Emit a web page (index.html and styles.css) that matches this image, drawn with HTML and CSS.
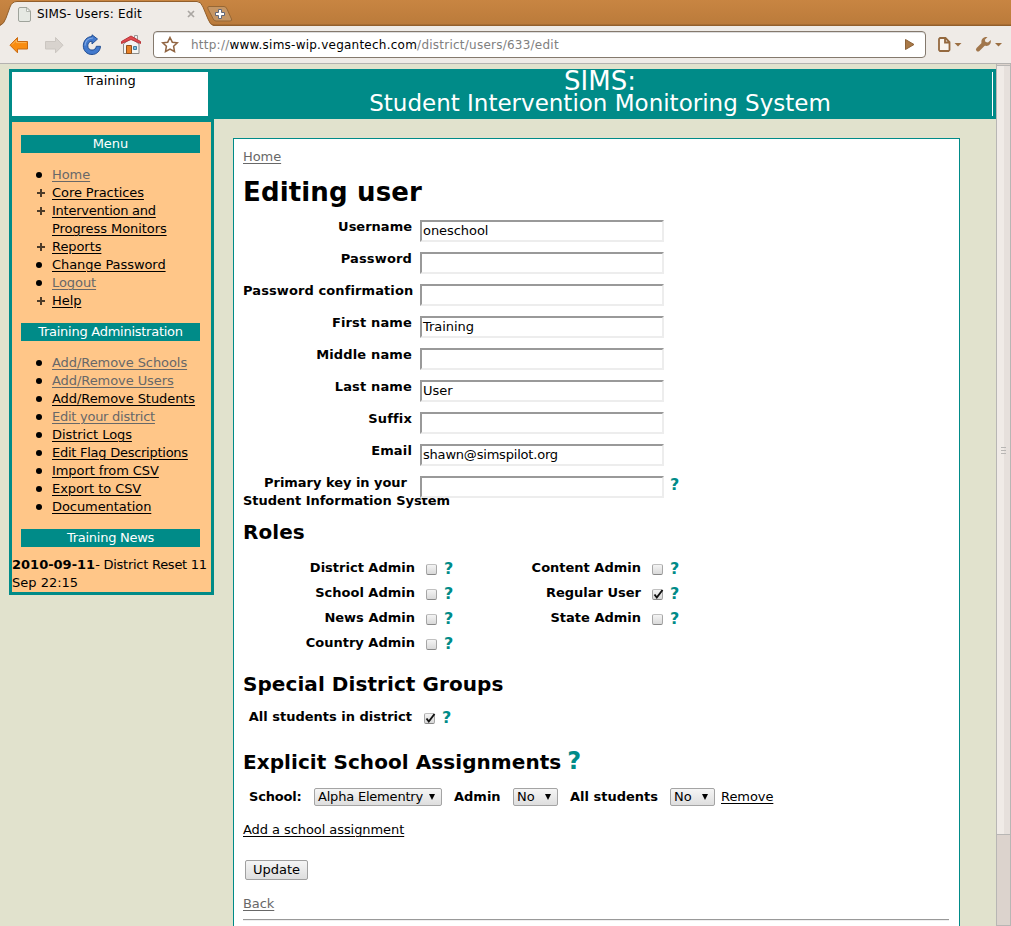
FILE: index.html
```html
<!DOCTYPE html>
<html lang="en">
<head>
<meta charset="utf-8">
<title>SIMS- Users: Edit</title>
<link rel="stylesheet" href="styles.css">
</head>
<body>
<div class="tabstrip">
  <svg class="tab-shape" width="240" height="26" viewBox="0 0 240 26">
    <path d="M0 26V25.500Q4 24 6 18L10 7Q12 1.500 17 1.500H197Q201 1.500 203 7L208 19Q210 25 214 26Z" fill="#efebe7"/>
    <path d="M0 25.500Q4 24 6 18L10 7Q12 1.500 17 1.500H197Q201 1.500 203 7L208 19Q210 25 214 25.500H240" fill="none" stroke="#925f2c"/>
    <path d="M209 6.500h15q2 0 3 2.500l4.500 10q.8 2-1.500 2h-14q-2 0-3-2.500L208 9q-1-2.500 1-2.500z" fill="#c59665" stroke="#966735"/>
    <path d="M218.500 9.500h3v3h3v3h-3v3h-3v-3h-3v-3h3z" fill="#fff" stroke="#626879"/>
  </svg>
  <svg class="page-icon" width="14" height="17" viewBox="0 0 14 17"><path d="M3 1.500h6l3.500 3.500v9q0 1.500-1.500 1.500H2q-1.500 0-1.500-1.500V3q0-1.500 1.500-1.500z" fill="#e6e9e3" stroke="#9fa39b"/><path d="M8.500 2v3.500h3.500z" fill="#fff" stroke="#b4b8b0"/></svg>
  <span class="tab-title">SIMS- Users: Edit</span>
  <svg class="tab-close" width="8" height="8" viewBox="0 0 8 8"><path d="M1 1l6 6M7 1L1 7" stroke="#aaa6a2" stroke-width="1.700"/></svg>
</div>
<div class="toolbar">
  <svg class="nav back" width="20" height="18" viewBox="0 0 20 18"><path d="M1 9.200L8.500 1.500V5.500H18.500V13H8.500V16.800z" fill="#f98d12" stroke="#c96a12"/><path d="M3 8.700L7.500 4v2.600h10" fill="none" stroke="#fcb558"/></svg>
  <svg class="nav fwd" width="20" height="18" viewBox="0 0 20 18"><path d="M19 9.200L11.500 1.500V5.500H1.500V13h10v3.800z" fill="#d8d3ce" stroke="#cbc6c1"/></svg>
  <svg class="nav reload" width="20" height="22" viewBox="0 0 20 22"><path d="M10 2.500V.800L15.500 5 10 10V7.200C7 7.400 5.800 9.200 5.800 11.800c0 2.600 1.800 4.300 4.200 4.300s4-1.500 4.300-3.800h4.200c-.4 5-4 8.200-8.500 8.200-5 0-8.700-3.800-8.700-8.600C1.300 6.500 5 2.700 10 2.500z" fill="#4279cd" stroke="#244f93"/><path d="M3 11.500C3.300 7 6 4.200 11 4" fill="none" stroke="#86abe4" stroke-width="1.200"/></svg>
  <svg class="nav home" width="22" height="21" viewBox="0 0 22 21"><path d="M14.500 1.500h3v6h-3z" fill="#eee" stroke="#999"/><path d="M3.500 10L11 4l8 6v9.500H3.500z" fill="#f4f4f2" stroke="#8b8b88"/><path d="M1.500 9.500V7.500L11 2l9.500 5.500v2L11 5.500z" fill="#e04a4e" stroke="#b83439"/><path d="M6.500 11.500h5v8h-5z" fill="#e98227" stroke="#90501c"/><path d="M13.500 12.500h3v3h-3z" fill="#7bbfe0" stroke="#427f9f"/></svg>
  <div class="omnibox">
    <svg class="star" width="18" height="17" viewBox="0 0 18 17"><path d="M9 1.500L11.300 6.200L16.300 6.800L12.600 10.200L13.500 15.500L9 13L4.500 15.500L5.400 10.200L1.700 6.800L6.700 6.200z" fill="#fff" stroke="#916542" stroke-width="1.500"/></svg>
    <span class="url"><span class="scheme">http://</span><b>www.sims-wip.vegantech.com</b>/district/users/633/edit</span>
    <svg class="go" width="10" height="11" viewBox="0 0 10 11"><path d="M0.500 .5L9 5.500L.5 10.500z" fill="#a97947" stroke="#8c6238"/></svg>
  </div>
  <svg class="doc" width="25" height="17" viewBox="0 0 25 17"><path d="M3 2h5.500l4 4v8l-1 1H3l-1-1V3zM8 2v4.500h4.500" fill="#f8f4ef" stroke="#94693f" stroke-width="1.800"/><path d="M17.500 7h7L21 10.500z" fill="#9b6f42"/></svg>
  <svg class="wrench" width="28" height="17" viewBox="0 0 28 17"><path d="M3 13.500L9 7.500" stroke="#a1764b" stroke-width="4" stroke-linecap="round"/><path d="M12.500 1L9.800 3.800L10.500 6L13 6.500L15.800 4C16.500 8.500 13 11 9.500 9.500L6.500 7C5.800 3 8.500.4 12.500 1z" fill="#a1764b"/><path d="M20 7h7l-3.500 3.500z" fill="#9b6f42"/></svg>
</div>
<div class="viewport">
  <div class="page">
    <header class="banner">
      <div class="logo">Training</div>
      <h1 class="brand"><span class="short">SIMS:</span><span>Student Intervention Monitoring System</span></h1>
      <i class="edge"></i>
    </header>
    <div class="columns">
      <nav class="sidebar">
        <h3 class="bar">Menu</h3>
        <ul class="menu">
          <li><a class="seen">Home</a></li>
          <li class="plus"><a>Core Practices</a></li>
          <li class="plus"><a><span class="tight">Intervention and</span><br>Progress Monitors</a></li>
          <li class="plus"><a>Reports</a></li>
          <li><a>Change Password</a></li>
          <li><a class="seen">Logout</a></li>
          <li class="plus"><a>Help</a></li>
        </ul>
        <h3 class="bar tight">Training Administration</h3>
        <ul class="menu">
          <li><a class="seen">Add/Remove Schools</a></li>
          <li><a class="seen">Add/Remove Users</a></li>
          <li><a>Add/Remove Students</a></li>
          <li><a class="seen tight">Edit your district</a></li>
          <li><a>District Logs</a></li>
          <li><a class="tight">Edit Flag Descriptions</a></li>
          <li><a>Import from CSV</a></li>
          <li><a>Export to CSV</a></li>
          <li><a>Documentation</a></li>
        </ul>
        <h3 class="bar tight">Training News</h3>
        <p class="news"><b>2010-09-11</b><span class="tight">- District Reset 11</span><br>Sep 22:15</p>
      </nav>
      <main class="content">
        <a class="seen">Home</a>
        <h1 class="title">Editing user</h1>
        <div class="field"><label class="plain">Username</label><div class="input">oneschool</div></div>
        <div class="field"><label>Password</label><div class="input"></div></div>
        <div class="field"><label class="full">Password confirmation</label><div class="input"></div></div>
        <div class="field"><label>First name</label><div class="input">Training</div></div>
        <div class="field"><label>Middle name</label><div class="input"></div></div>
        <div class="field"><label>Last name</label><div class="input">User</div></div>
        <div class="field"><label>Suffix</label><div class="input"></div></div>
        <div class="field"><label>Email</label><div class="input mail">shawn@simspilot.org</div></div>
        <div class="field"><label class="long"><span>Primary key in your</span><br>Student Information System</label><div class="input"></div><b class="help">?</b></div>
        <h2 class="roles-title">Roles</h2>
        <div class="roles">
          <div class="role"><label>District Admin</label><i class="check"></i><b class="help">?</b></div>
          <div class="role"><label>Content Admin</label><i class="check"></i><b class="help">?</b></div>
          <div class="role"><label>School Admin</label><i class="check"></i><b class="help">?</b></div>
          <div class="role"><label>Regular User</label><i class="check"><svg width="12" height="12" viewBox="0 0 12 12"><path d="M2.500 5.500L4.800 8.500L10.500 1" fill="none" stroke="#111" stroke-width="1.900"/></svg></i><b class="help">?</b></div>
          <div class="role"><label>News Admin</label><i class="check"></i><b class="help">?</b></div>
          <div class="role"><label>State Admin</label><i class="check"></i><b class="help">?</b></div>
          <div class="role"><label>Country Admin</label><i class="check"></i><b class="help">?</b></div>
        </div>
        <h2 class="groups-title">Special District Groups</h2>
        <div class="role group"><label>All students in district</label><i class="check"><svg width="12" height="12" viewBox="0 0 12 12"><path d="M2.500 5.500L4.800 8.500L10.500 1" fill="none" stroke="#111" stroke-width="1.900"/></svg></i><b class="help">?</b></div>
        <h2 class="assign-title">Explicit School Assignments <span class="bighelp">?</span></h2>
        <div class="assign">
          <label class="l-school">School:</label><div class="select wide"><span>Alpha Elementry</span><i></i></div>
          <label class="l-admin">Admin</label><div class="select"><span>No</span><i></i></div>
          <label class="l-all">All students</label><div class="select"><span>No</span><i></i></div>
          <a>Remove</a>
        </div>
        <a class="add">Add a school assignment</a>
        <div class="button">Update</div>
        <a class="seen backlink">Back</a>
        <hr>
      </main>
    </div>
  </div>
  <div class="scrollbar"><div class="thumb"><i></i><i></i><i></i></div></div>
</div>
</body>
</html>
```
FILE: styles.css
```css
* { box-sizing: border-box; }
body { margin: 0; width: 1011px; height: 926px; overflow: hidden; font: 13px/18px "DejaVu Sans", sans-serif; color: #000; background: #e1e2cd; }
h1, h2, h3, p, ul { margin: 0; padding: 0; }
svg { display: block; flex: none; }
a { text-decoration: underline; text-underline-offset: 2px; text-decoration-thickness: 1px; white-space: nowrap; letter-spacing: -0.07px; }
.seen { color: #686868; }
.tight { letter-spacing: -0.26px; }

.tabstrip { position: relative; height: 26px; display: flex; align-items: center; background: linear-gradient(#c88542, #bb7b3b 24px, #925f2c 25px); }
.tab-shape { position: absolute; left: 0; top: 0; }
.page-icon, .tab-title, .tab-close { position: relative; }
.page-icon { margin: 2px 5px 0 18px; }
.tab-title { width: 150px; font-size: 12px; letter-spacing: 0.17px; margin-top: 1px; white-space: nowrap; }
.tab-close { margin-top: 2px; }

.toolbar { height: 38px; display: flex; align-items: center; background: #efebe7; border-bottom: 1px solid #b4b2b0; }
.back { margin-left: 9px; }
.fwd { margin-left: 15px; }
.reload { margin-left: 18px; }
.home { margin-left: 18px; }
.omnibox { width: 773px; height: 27px; margin-left: 11px; display: flex; align-items: center; background: #fff; border: 1px solid #84796d; border-radius: 4px; box-shadow: inset 0 1px #ddd; }
.star { margin-left: 7px; }
.url { flex: 1; margin-left: 12px; font-size: 12px; letter-spacing: 0.24px; color: #808080; white-space: nowrap; }
.url b { font-weight: normal; color: #000; }
.go { margin-right: 10px; }
.doc { margin-left: 11px; }
.wrench { margin-left: 13px; }

.viewport { display: flex; height: 862px; }
.page { width: 996px; overflow: hidden; padding: 5px 0 0 9px; }
.banner { height: 50px; display: flex; padding: 3px; background: #008b88; color: #fff; }
.logo { width: 196px; height: 44px; background: #fff; color: #000; text-align: center; }
.brand { flex: 1; margin-top: -2px; font-size: 23px; line-height: 22px; font-weight: normal; text-align: center; white-space: nowrap; }
.brand span { display: block; }
.brand .short { font-size: 26px; }
.edge { width: 1px; height: 44px; background: #fff; }
.columns { display: flex; align-items: flex-start; }

.sidebar { width: 205px; height: 476px; border: 3px solid #008b88; background: #ffc688; padding-top: 13px; }
.bar { width: 179px; height: 18px; margin-left: 9px; background: #008b88; color: #fff; font-size: 13px; font-weight: normal; text-align: center; }
.menu { list-style: none; padding: 13px 0 13px 24px; }
.menu li { display: flex; }
.menu li::before { content: ""; flex: none; width: 6px; height: 6px; margin: 6px 10px 0 0; border-radius: 50%; background: #000; }
.menu li.plus::before { width: 8px; height: 8px; margin: 5px 7px 0 1px; border-radius: 0; background: linear-gradient(#4d3c29, #4d3c29) center / 8px 2px no-repeat, linear-gradient(#4d3c29, #4d3c29) center / 2px 8px no-repeat; }
.news { margin-top: 9px; white-space: nowrap; }

.content { width: 727px; height: 800px; margin: 19px 0 0 19px; padding: 9px; display: flex; flex-direction: column; align-items: flex-start; background: #fff; border: 1px solid #008b88; }
label { font-weight: bold; white-space: nowrap; }
.title { height: 52px; font-size: 26px; line-height: 52px; letter-spacing: 0.15px; }
.field { display: flex; height: 32px; }
.field label { width: 169px; text-align: right; margin-right: 8px; letter-spacing: 0.15px; }
.field label.plain { letter-spacing: 0; }
.field label.full { text-align: left; letter-spacing: 0.1px; }
.field label.long { text-align: left; letter-spacing: -0.03px; }
.field label.long span { padding-left: 21px; }
.input { position: relative; width: 244px; height: 22px; margin-top: 2px; padding-left: 1px; background: #fff; border: 2px solid; border-color: #999 #ededed #ededed #999; font-size: 13px; line-height: 17px; letter-spacing: -0.05px; }
.input.mail { letter-spacing: -0.2px; }
.help { color: #008b88; font-size: 16px; }
.field .help { margin: 2px 0 0 6px; }
h2 { font-size: 20px; line-height: 30px; height: 30px; white-space: nowrap; letter-spacing: 0.07px; }
.roles-title { margin-top: 11px; }
.roles { display: grid; grid-template-columns: 226px 226px; grid-auto-rows: 25px; margin-top: 9px; }
.role { display: flex; align-items: center; }
.role label { width: 172px; margin-top: -1px; text-align: right; }
.role .help { margin: 1px 0 0 7px; }
.check { width: 11px; height: 11px; margin: 2px 0 0 11px; border: 1px solid #a6a6a6; border-top-color: #c0c0c0; border-bottom-color: #888; border-radius: 2px; background: linear-gradient(#f4f4f4, #d9d9d9); }
.check svg { margin: -1px; }
.groups-title { margin-top: 13px; }
.group { height: 25px; margin-top: 6px; }
.group label { width: 169px; }
.group .check { margin-left: 12px; }
.assign-title { margin-top: 17px; display: flex; align-items: center; }
.bighelp { margin: -2px 0 0 6px; color: #008b88; font-size: 24px; }
.assign { display: flex; height: 18px; margin-top: 11px; margin-left: 6px; white-space: nowrap; }
.select { width: 45px; height: 18px; padding: 0 6px 0 3px; display: flex; align-items: center; justify-content: space-between; border: 1px solid #a4a4a4; border-radius: 2px; background: linear-gradient(#f5f5f5, #dedede); }
.select.wide { width: 128px; letter-spacing: -0.2px; }
.select i { border: 3px solid transparent; border-top: 6px solid #000; border-bottom: 0; }
.l-school { width: 65px; letter-spacing: -0.2px; }
.l-admin { width: 59px; margin-left: 12px; }
.l-all { width: 100px; margin-left: 12px; }
.assign a { margin-left: 6px; }
.add { margin-top: 15px; }
.button { width: 63px; height: 20px; margin: 21px 0 0 2px; text-align: center; border: 1px solid #a0a0a0; border-radius: 2px; background: linear-gradient(#f5f5f5, #dedede); }
.backlink { margin-top: 15px; }
hr { width: 706px; margin: 6px 0 0; height: 2px; border: 0; border-top: 1px solid #999; border-bottom: 1px solid #eee; }

.scrollbar { width: 15px; padding-top: 1px; background: #dcd3cd; border: 1px solid #b8b6b4; border-top: 0; }
.thumb { height: 770px; display: flex; flex-direction: column; align-items: center; justify-content: center; gap: 2px; background: linear-gradient(90deg, #f0ebe7 7px, #e6e0dc 7px); border: solid #b8b6b4; border-width: 1px 0; }
.thumb i { width: 5px; height: 1px; background: #b8b6b4; }
```
